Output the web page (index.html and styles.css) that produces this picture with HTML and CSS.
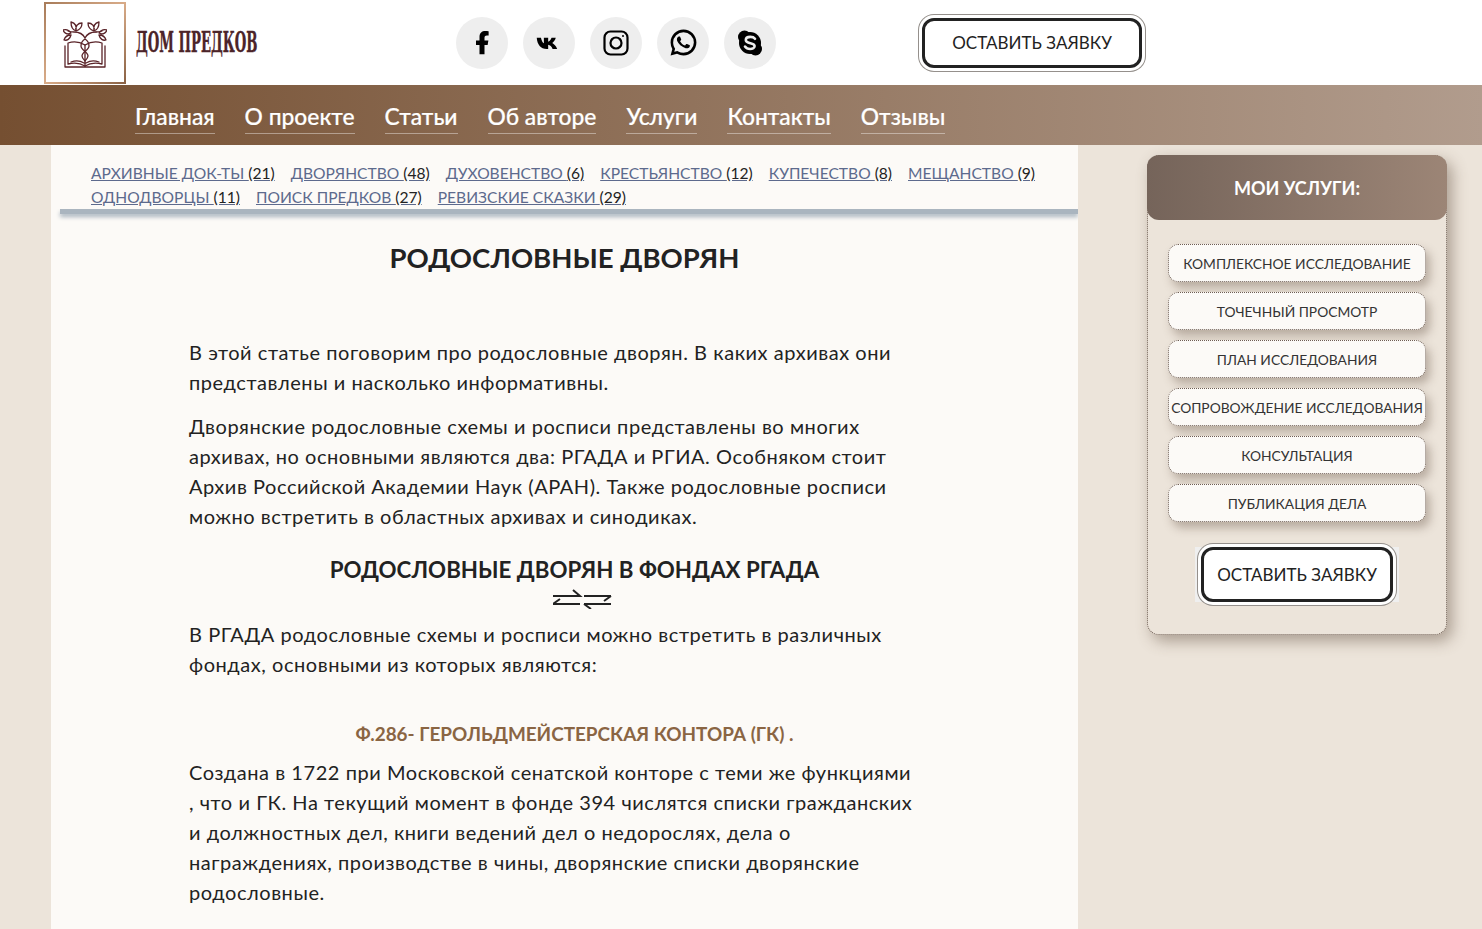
FILE: index.html
```html
<!DOCTYPE html>
<html lang="ru">
<head>
    <meta charset="UTF-8">
    <meta name="viewport" content="width=device-width, initial-scale=1.0">
    <title>Родословные дворян</title>
    <link rel="stylesheet" href="styles.css">
</head>
<body>
    <header class="site-header">
        <a class="logo" href="#">
            <span class="logo-box">
                <svg class="logo-mark" width="44" height="48" viewBox="0 0 44 48" fill="none" stroke="#5a2429" stroke-width="1.300" stroke-linejoin="round" stroke-linecap="round">
                    <path d="M5 22c6-2 12-1 17 2 5-3 11-4 17-2v21c-6-1.500-12-1-17 2-5-3-11-3.500-17-2z"/>
                    <path d="M2 25v21h40V25M22 24v21M8 41c5-2 9-1.500 13 1M36 41c-5-2-9-1.500-13 1"/>
                    <path d="M22 18c-3 2-4 5-4 7 0 4 7 6 7 10 0 2-2 4-3 5M22 18c3 2 4 5 4 7 0 4-7 6-7 10 0 2 2 4 3 5"/>
                    <path d="M22 17c-2-4-6-6-11-6M22 17c2-4 6-6 11-6M11 11c-3 0-5-.5-6-1"/>
                    <path d="M33 11c3 0 5-.5 6-1"/>
                    <path d="M13 10c-3-1-5-4-5-9 4 1 6 4 5 9zM13 10c3-1 6-4 6-8-4 0-7 3-6 8zM31 10c3-1 5-4 5-9-4 1-6 4-5 9zM31 10c-3-1-6-4-6-8 4 0 7 3 6 8z"/>
                    <path d="M8 12C6 9 3 8 0 9c1 3 4 5 8 3zM8 14c-3 0-6 2-7 5 3 1 6-1 7-5zM36 12c2-3 5-4 8-3-1 3-4 5-8 3zM36 14c3 0 6 2 7 5-3 1-6-1-7-5z"/>
                </svg>
            </span>
            <span class="logo-name">ДОМ ПРЕДКОВ</span>
        </a>
        <div class="socials">
            <a class="social" href="#">
                <svg width="30" height="30" viewBox="0 0 24 24"><path d="M14 13.500h2.500l.6-3.500H14V8c0-1.030.3-2 2-2h1.300V2.600c-.5-.1-1.600-.2-2.700-.2C12 2.400 10 4 10 7v3H7.200v3.500H10V21h4z"/></svg>
            </a>
            <a class="social" href="#">
                <svg width="28" height="28" viewBox="0 0 24 24"><path d="M1.500 7.500h3.600c.5 2.500 1.600 4.300 2.500 4.800V7.500h3.700v3.400c.9-.3 2.200-1.600 2.900-3.400h3.600c-.5 2-1.700 3.600-3 4.600 1.500.8 3.200 2.400 4.200 5h-3.900c-.8-1.900-2.200-3.300-3.800-3.500v3.500h-1.200c-5.200 0-8.200-3.600-8.600-9.600z"/></svg>
            </a>
            <a class="social" href="#">
                <svg width="30" height="30" viewBox="0 0 30 30" fill="none" stroke="#000" stroke-width="2.200"><rect x="3.500" y="3.500" width="23" height="23" rx="6"/><circle cx="15" cy="15" r="5.500"/><circle cx="22" cy="8" r="1" fill="#000" stroke="none"/></svg>
            </a>
            <a class="social" href="#">
                <svg width="31" height="31" viewBox="0 0 24 24"><path d="M7.253 18.494l.724.423A7.953 7.953 0 0 0 12 20a8 8 0 1 0-8-8c0 1.436.377 2.813 1.084 4.024l.422.724-.653 2.401 2.400-.655zM2.004 22l1.352-4.968A9.954 9.954 0 0 1 2 12C2 6.477 6.477 2 12 2s10 4.477 10 10-4.477 10-10 10a9.954 9.954 0 0 1-5.030-1.355L2.004 22zM8.391 7.308c.134-.01.269-.01.403-.004.054.004.108.01.162.016.159.018.334.115.393.249.298.676.588 1.357.868 2.040.062.152.025.347-.093.537a4.380 4.380 0 0 1-.263.372c-.113.145-.356.411-.356.411s-.099.118-.061.265c.014.056.06.137.102.205l.059.095c.256.427.6.860 1.020 1.268.120.116.237.235.363.346.468.413.998.750 1.570 1l.005.002c.085.037.128.057.252.110.062.026.126.049.191.066a.350.350 0 0 0 .367-.130c.724-.877.790-.934.796-.934v.002a.482.482 0 0 1 .378-.127c.060.004.121.015.177.040.531.243 1.400.622 1.400.622l.582.261c.098.047.187.158.190.265.004.067.010.175-.013.373-.032.259-.110.570-.188.733a1.155 1.155 0 0 1-.210.302 2.378 2.378 0 0 1-.330.288 3.710 3.710 0 0 1-.125.090 5.024 5.024 0 0 1-.383.220 1.990 1.990 0 0 1-.833.230c-.185.010-.370.024-.556.014-.008 0-.568-.087-.568-.087a9.448 9.448 0 0 1-3.840-2.046c-.226-.199-.435-.413-.649-.626-.890-.885-1.562-1.840-1.970-2.742A3.470 3.470 0 0 1 6.900 9.688a2.729 2.729 0 0 1 .564-1.680c.073-.094.142-.192.261-.305.127-.120.207-.184.294-.228a.961.961 0 0 1 .371-.100z"/></svg>
            </a>
            <a class="social" href="#">
                <svg width="30" height="30" viewBox="0 0 30 30"><circle cx="15" cy="15" r="11"/><circle cx="9.500" cy="9" r="6.500"/><circle cx="20.500" cy="21" r="6.500"/><path d="M20 10.800c-1-1.300-2.800-1.900-4.700-1.900-2.600 0-4.500 1.200-4.500 3.100 0 4.200 8.800 2.300 8.800 6 0 1.700-1.900 3-4.500 3-2.200 0-4-.8-5.100-2.400" fill="none" stroke="#eee" stroke-width="2.600" stroke-linecap="round"/></svg>
            </a>
        </div>
        <a class="request-button header-button" href="#">ОСТАВИТЬ ЗАЯВКУ</a>
    </header>

    <nav class="main-nav">
        <a href="#">Главная</a>
        <a href="#">О проекте</a>
        <a href="#">Статьи</a>
        <a href="#">Об авторе</a>
        <a href="#">Услуги</a>
        <a href="#">Контакты</a>
        <a href="#">Отзывы</a>
    </nav>

    <div class="page">
        <main class="content">
            <div class="tags">
                <a href="#">Архивные док-ты <b>(21)</b></a>
                <a href="#">Дворянство <b>(48)</b></a>
                <a href="#">Духовенство <b>(6)</b></a>
                <a href="#">Крестьянство <b>(12)</b></a>
                <a href="#">Купечество <b>(8)</b></a>
                <a href="#">Мещанство <b>(9)</b></a>
                <a href="#">Однодворцы <b>(11)</b></a>
                <a href="#">Поиск предков <b>(27)</b></a>
                <a href="#">Ревизские сказки <b>(29)</b></a>
            </div>
            <div class="tags-rule"></div>

            <h1>РОДОСЛОВНЫЕ ДВОРЯН</h1>

            <article class="article">
                <p>В этой статье поговорим про родословные дворян. В каких архивах они<br>представлены и насколько информативны.</p>
                <p>Дворянские родословные схемы и росписи представлены во многих<br>архивах, но основными являются два: РГАДА и РГИА. Особняком стоит<br>Архив Российской Академии Наук (АРАН). Также родословные росписи<br>можно встретить в областных архивах и синодиках.</p>
                <h2>РОДОСЛОВНЫЕ ДВОРЯН В ФОНДАХ РГАДА</h2>
                <div class="ornament">
                    <svg width="60" height="20" viewBox="0 0 60 20" fill="none" stroke="#222" stroke-width="2"><path d="M0 7h27l-7-6M0 15h27M0 15l7-5M31 7h27M31 15h27M31 15l7 5M58 7l-7 5"/></svg>
                </div>
                <p>В РГАДА родословные схемы и росписи можно встретить в различных<br>фондах, основными из которых являются:</p>
                <h3>Ф.286- ГЕРОЛЬДМЕЙСТЕРСКАЯ КОНТОРА (ГК) .</h3>
                <p>Создана в 1722 при Московской сенатской конторе с теми же функциями<br>, что и ГК. На текущий момент в фонде 394 числятся списки гражданских<br>и должностных дел, книги ведений дел о недорослях, дела о<br>награждениях, производстве в чины, дворянские списки дворянские<br>родословные.</p>
            </article>
        </main>

        <aside class="services">
            <div class="services-title">МОИ УСЛУГИ:</div>
            <div class="services-list">
                <a href="#">Комплексное исследование</a>
                <a href="#">Точечный просмотр</a>
                <a href="#">План исследования</a>
                <a href="#">Сопровождение исследования</a>
                <a href="#">Консультация</a>
                <a href="#">Публикация дела</a>
            </div>
            <div class="services-action">
                <span class="button-back"><a class="request-button side-button" href="#">ОСТАВИТЬ ЗАЯВКУ</a></span>
            </div>
        </aside>
    </div>
</body>
</html>
```

FILE: styles.css
```css
* {
    box-sizing: border-box;
}

body {
    margin: 0;
    font-family: Lato, "Open Sans", sans-serif;
    background-color: #ece4da;
    color: #222;
}

a {
    text-decoration: none;
    color: inherit;
}

/* Header */
.site-header {
    display: flex;
    align-items: center;
    height: 85px;
    padding-left: 44px;
    background-color: #fff;
}

.logo {
    display: flex;
    align-items: center;
    width: 412px;
}

.logo-box {
    display: flex;
    align-items: center;
    justify-content: center;
    width: 82px;
    height: 82px;
    border: 2px solid;
    border-image: linear-gradient(135deg, #a87c5a, #d8ab88 50%, #8a6245) 1;
    margin-right: 10px;
}

.logo-mark {
    margin-top: 5px;
}

.logo-name {
    font-family: "DejaVu Serif Condensed", "DejaVu Serif", serif;
    font-weight: 700;
    font-size: 28px;
    white-space: nowrap;
    color: #4c2429;
    -webkit-text-stroke: 0.400px #4c2429;
    transform: scaleX(0.525);
    transform-origin: left center;
}

.socials {
    display: flex;
    gap: 15px;
    width: 466px;
}

.social {
    display: flex;
    align-items: center;
    justify-content: center;
    width: 52px;
    height: 52px;
    border-radius: 50%;
    background-color: #eee;
}

.request-button {
    display: flex;
    align-items: center;
    justify-content: center;
    border: 3px solid #222;
    border-radius: 12px;
    background-color: #fff;
    box-shadow: 0 0 0 3px #fff, 0 0 0 4px #95908c;
    font-size: 17px;
    color: #222;
}

.header-button {
    width: 220px;
    height: 50px;
}

/* Navigation */
.main-nav {
    display: flex;
    gap: 30px;
    height: 60px;
    padding: 17px 0 0 135px;
    background: linear-gradient(90deg, #754f31, #b19c8d);
}

.main-nav a {
    height: 32px;
    font-size: 22.800px;
    font-weight: 500;
    line-height: 29px;
    color: #fff;
    -webkit-text-stroke: 0.200px #fff;
    border-bottom: 1px solid rgba(255, 255, 255, 0.4);
}

/* Page */
.page {
    display: flex;
    align-items: flex-start;
    padding-left: 51px;
}

.content {
    width: 1027px;
    min-height: 784px;
    background-color: #fcfaf7;
}

.tags {
    display: flex;
    flex-wrap: wrap;
    column-gap: 16px;
    padding: 16px 30px 0 40px;
    height: 64px;
    font-size: 15.600px;
    line-height: 24px;
}

.tags a {
    text-transform: uppercase;
    text-decoration: underline;
    color: #5d6a8d;
}

.tags b {
    font-weight: 400;
    color: #222;
}

.tags-rule {
    height: 5px;
    margin-left: 9px;
    background-color: #aab5bf;
    box-shadow: 0 3px 4px #aab5bf;
    clip-path: inset(0 0 -10px -10px);
}

h1 {
    margin: 26px 0 0;
    font-size: 27.500px;
    font-weight: 700;
    line-height: 36px;
    text-align: center;
}

.article {
    width: 771px;
    margin: 61px 0 0 138px;
    font-size: 20px;
    line-height: 30px;
    letter-spacing: 0.550px;
}

.article p {
    margin: 0 0 14px;
}

.article h2 {
    margin: 24px 0 0;
    font-size: 22.300px;
    font-weight: 700;
    line-height: 30px;
    letter-spacing: 0;
    text-align: center;
}

.ornament {
    display: flex;
    justify-content: center;
    height: 20px;
    margin: 4px 0 10px;
    padding-left: 16px;
}

.article h3 {
    margin: 40px 0 8px;
    font-size: 18.900px;
    font-weight: 700;
    line-height: 30px;
    letter-spacing: 0;
    text-align: center;
    color: #8a6543;
}

/* Services */
.services {
    width: 300px;
    height: 480px;
    margin: 10px 0 0 69px;
    border: 1px dotted #6e5d53;
    border-radius: 12px;
    background-color: #ece4da;
    box-shadow: 5px 6px 15px rgba(90, 70, 55, 0.45);
}

.services-title {
    height: 65px;
    margin: -1px -1px 0;
    border-radius: 12px;
    background: linear-gradient(90deg, #75645a, #9c8576);
    font-size: 18px;
    font-weight: 700;
    line-height: 66px;
    text-align: center;
    color: #fff;
}

.services-list {
    display: flex;
    flex-direction: column;
    gap: 10px;
    padding: 24px 20px 0;
}

.services-list a {
    display: block;
    height: 38px;
    border: 1px dotted #6e5d53;
    border-radius: 10px;
    background-color: #fcfaf7;
    box-shadow: 4px 6px 10px rgba(90, 70, 55, 0.35);
    font-size: 13.800px;
    line-height: 38px;
    text-align: center;
    text-transform: uppercase;
    white-space: nowrap;
    color: #333;
}

.services-action {
    display: flex;
    justify-content: center;
    margin-top: 25px;
}

.button-back {
    display: block;
    padding: 0 6px;
    background-color: #efefef;
}

.side-button {
    width: 192px;
    height: 55px;
}
```
